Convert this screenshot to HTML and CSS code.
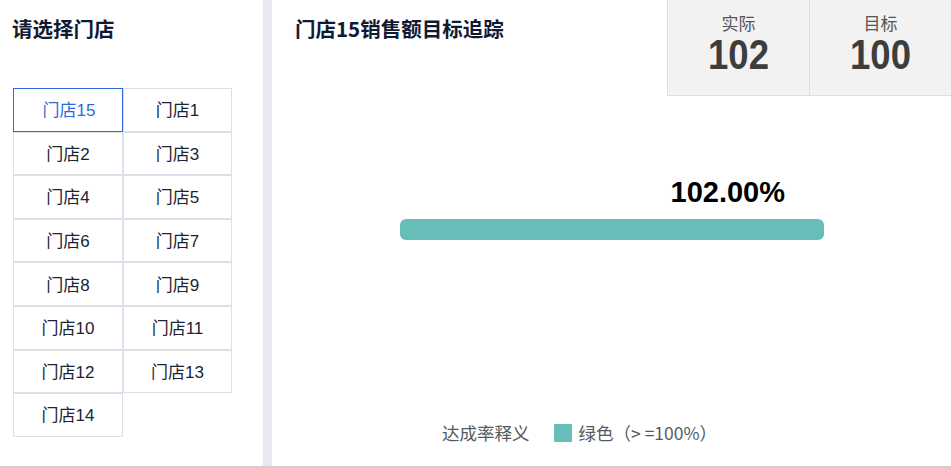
FILE: index.html
```html
<!DOCTYPE html>
<html lang="zh">
<head>
<meta charset="utf-8">
<link rel="stylesheet" href="styles.css">
</head>
<body>
<div class="page">
  <aside class="side">
    <h2 class="side-title">请选择门店</h2>
    <div class="store-grid">
      <div class="cell active">门店15</div>
      <div class="cell">门店1</div>
      <div class="cell">门店2</div>
      <div class="cell">门店3</div>
      <div class="cell">门店4</div>
      <div class="cell">门店5</div>
      <div class="cell">门店6</div>
      <div class="cell">门店7</div>
      <div class="cell">门店8</div>
      <div class="cell">门店9</div>
      <div class="cell">门店10</div>
      <div class="cell">门店11</div>
      <div class="cell">门店12</div>
      <div class="cell">门店13</div>
      <div class="cell">门店14</div>
    </div>
  </aside>
  <div class="divider"></div>
  <main class="main">
    <header class="main-head">
      <h2 class="main-title">门店15销售额目标追踪</h2>
      <div class="stats">
        <div class="stat">
          <div class="stat-label">实际</div>
          <div class="stat-value">102</div>
        </div>
        <div class="stat">
          <div class="stat-label">目标</div>
          <div class="stat-value">100</div>
        </div>
      </div>
    </header>
    <section class="progress">
      <div class="pct">102.00%</div>
      <div class="bar"></div>
    </section>
    <footer class="legend">
      <span class="legend-title">达成率释义</span>
      <span class="swatch"></span>
      <span class="legend-text">绿色（&gt; =100%）</span>
    </footer>
  </main>
</div>
</body>
</html>
```

FILE: styles.css
```css
* { box-sizing: border-box; }
html, body { margin: 0; padding: 0; background: #fff; }
body {
  font-family: "Liberation Sans", "Noto Sans CJK SC", sans-serif;
  width: 951px;
  height: 468px;
  overflow: hidden;
}
.page {
  display: flex;
  height: 468px;
  border-bottom: 2px solid #cfcfd3;
}
.side {
  width: 263px;
  padding: 14px 0 0 13px;
}
.side-title {
  margin: 0 0 0 -1px;
  font-family: "Noto Sans CJK SC", sans-serif;
  font-size: 20.5px;
  font-weight: 700;
  line-height: 28px;
  color: #111a33;
}
.store-grid {
  margin-top: 46px;
  display: grid;
  grid-template-columns: 110px 109px;
  grid-auto-rows: 43.6px;
  width: 219px;
}
.cell {
  border: 1px solid #dcdfe8;
  display: flex;
  align-items: center;
  justify-content: center;
  font-size: 17px;
  color: #1b2433;
  padding-bottom: 2px;
}
.cell.active {
  border-color: #2b6be0;
  color: #2b6be0;
  padding-left: 2px;
}
.divider {
  width: 9px;
  background: #e8e8ee;
}
.main {
  flex: 1;
  display: flex;
  flex-direction: column;
}
.main-head {
  display: flex;
  align-items: flex-start;
}
.main-title {
  margin: 14px 0 0 23px;
  font-family: "Noto Sans CJK SC", sans-serif;
  font-size: 20.5px;
  font-weight: 700;
  line-height: 28px;
  color: #111a33;
}
.stats {
  margin-left: auto;
  display: flex;
  width: 284px;
  height: 96px;
  background: #f2f2f2;
  border-left: 1px solid #dedede;
  border-bottom: 1px solid #dedede;
}
.stat {
  flex: 1;
  text-align: center;
  padding-top: 12px;
}
.stat + .stat { border-left: 1px solid #dedede; }
.stat-label {
  font-family: "Noto Sans CJK SC", sans-serif;
  font-size: 17px;
  line-height: 22px;
  color: #555;
}
.stat-value {
  font-size: 42px;
  font-weight: 700;
  line-height: 42px;
  color: #3d3d3d;
  transform: scaleX(0.87);
}
.progress {
  padding: 79px 127px 0 128px;
}
.pct {
  text-align: right;
  padding-right: 39px;
  font-size: 29px;
  font-weight: 700;
  line-height: 34px;
  color: #000;
}
.bar {
  margin-top: 10px;
  height: 21px;
  border-radius: 6px;
  background: #67bdb8;
}
.legend {
  margin-top: auto;
  margin-bottom: 21px;
  display: flex;
  align-items: center;
  padding-left: 170px;
  font-family: "Noto Sans CJK SC", sans-serif;
  font-size: 17.5px;
  color: #555a61;
  line-height: 24px;
}
.swatch {
  width: 18px;
  height: 18px;
  background: #67bdb8;
  margin: 0 7px 0 24px;
  border-radius: 1px;
}
```
